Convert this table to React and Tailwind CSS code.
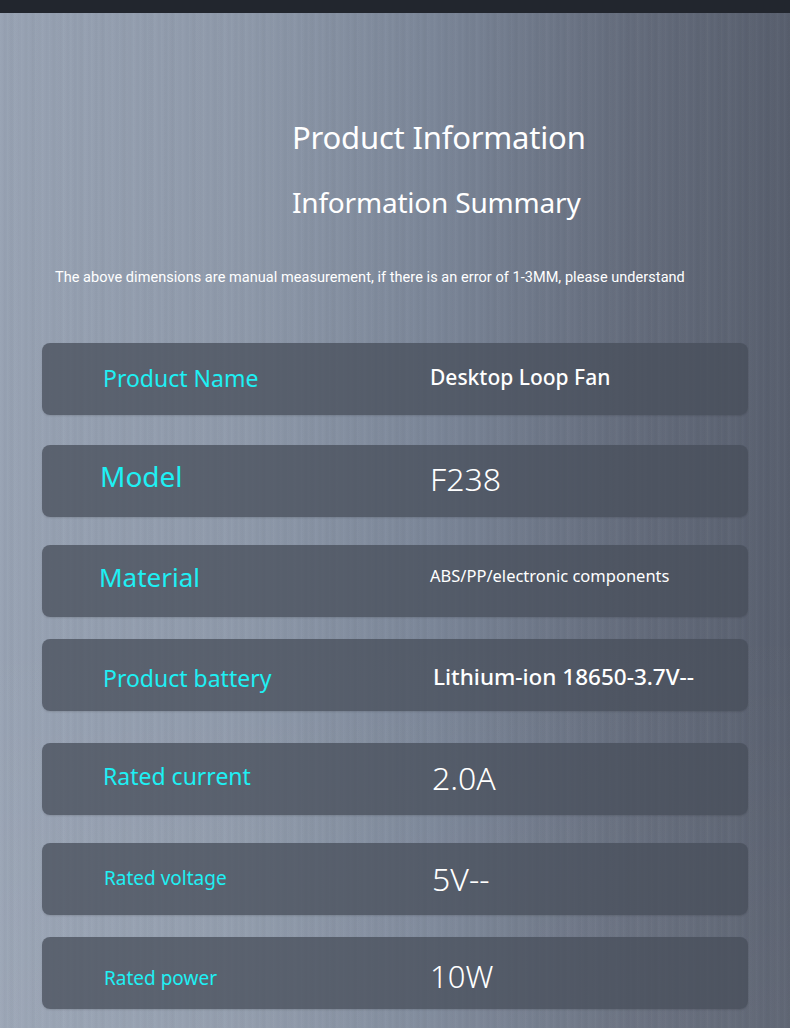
import React from "react";

const ROWS = [
  {
    label: "Product Name",
    value: "Desktop Loop Fan",
    wrap: "mt-[55px]",
    labelCls: "text-[23px] pl-[61px] -translate-y-[1px]",
    valueCls: "text-[21px] font-medium -translate-y-[2px]",
  },
  {
    label: "Model",
    value: "F238",
    wrap: "mt-[30px]",
    labelCls: "text-[28px] pl-[58px] -translate-y-[5px]",
    valueCls: "text-[32px] font-light -translate-y-[2px]",
  },
  {
    label: "Material",
    value: "ABS/PP/electronic components",
    wrap: "mt-[28px]",
    labelCls: "text-[26px] pl-[57px] -translate-y-[4px]",
    valueCls: "text-[16.5px] -translate-y-[5px]",
  },
  {
    label: "Product battery",
    value: "Lithium-ion 18650-3.7V--",
    wrap: "mt-[22px]",
    labelCls: "text-[23px] pl-[61px] translate-y-[3px]",
    valueCls: "text-[22.5px] font-medium translate-y-[2px] pl-[3px]",
  },
  {
    label: "Rated current",
    value: "2.0A",
    wrap: "mt-[32px]",
    labelCls: "text-[23px] pl-[61px] -translate-y-[3px]",
    valueCls: "text-[32px] font-light -translate-y-[1px] pl-[2px]",
  },
  {
    label: "Rated voltage",
    value: "5V--",
    wrap: "mt-[28px]",
    labelCls: "text-[19px] pl-[62px] -translate-y-[1px]",
    valueCls: "text-[32px] font-light pl-[2px]",
  },
  {
    label: "Rated power",
    value: "10W",
    wrap: "mt-[22px]",
    labelCls: "text-[19px] pl-[62px] translate-y-[5px]",
    valueCls: "text-[31px] font-light translate-y-[3px]",
  },
];

function InfoRow({ row }) {
  return (
    <div
      className={`${row.wrap} mx-[42px] h-[72px] rounded-lg bg-[#474d59]/75 flex items-center shadow-[0_1px_2px_rgba(0,0,0,0.12)]`}
    >
      <div className={`w-[388px] shrink-0 text-[#1ef0f4] leading-none ${row.labelCls}`}>
        {row.label}
      </div>
      <div className={`text-white leading-none ${row.valueCls}`}>{row.value}</div>
    </div>
  );
}

export default function App() {
  return (
    <div className="w-[790px] h-[1028px] overflow-hidden bg-[#22262e] font-['Noto_Sans',sans-serif]">
      <div className="h-[13px] bg-[#22262e]" />
      <div className="relative h-[1015px] bg-[linear-gradient(90deg,#98a3b4_0%,#8f9aab_30%,#7b8698_55%,#646c7c_80%,#585f6e_100%)]">
        {/* brushed metal streaks */}
        <div className="absolute inset-0 bg-[repeating-linear-gradient(90deg,rgba(255,255,255,0.025)_0px,rgba(255,255,255,0)_2px,rgba(0,0,0,0.02)_5px,rgba(255,255,255,0)_7px)]" />
        <div className="absolute inset-0 bg-[repeating-linear-gradient(90deg,rgba(0,0,0,0)_0px,rgba(0,0,0,0.012)_11px,rgba(255,255,255,0.01)_17px,rgba(0,0,0,0)_23px)]" />
        <div className="absolute inset-0 bg-[linear-gradient(180deg,rgba(0,0,0,0)_0%,rgba(0,0,0,0)_60%,rgba(255,255,255,0.05)_100%)]" />
        <div className="relative">
          <h1 className="pt-[106px] pl-[292px] text-[31px] leading-[36px] text-white tracking-[-0.2px]">
            Product Information
          </h1>
          <h2 className="mt-[30px] pl-[292px] text-[28px] leading-[34px] text-white tracking-[-0.2px]">
            Information Summary
          </h2>
          <p className="mt-[49px] pl-[55px] text-[14.5px] leading-[20px] text-white font-['Roboto',sans-serif] tracking-[0.05px]">
            The above dimensions are manual measurement, if there is an error of 1-3MM, please understand
          </p>
          {ROWS.map((row) => (
            <InfoRow key={row.label} row={row} />
          ))}
        </div>
      </div>
    </div>
  );
}
